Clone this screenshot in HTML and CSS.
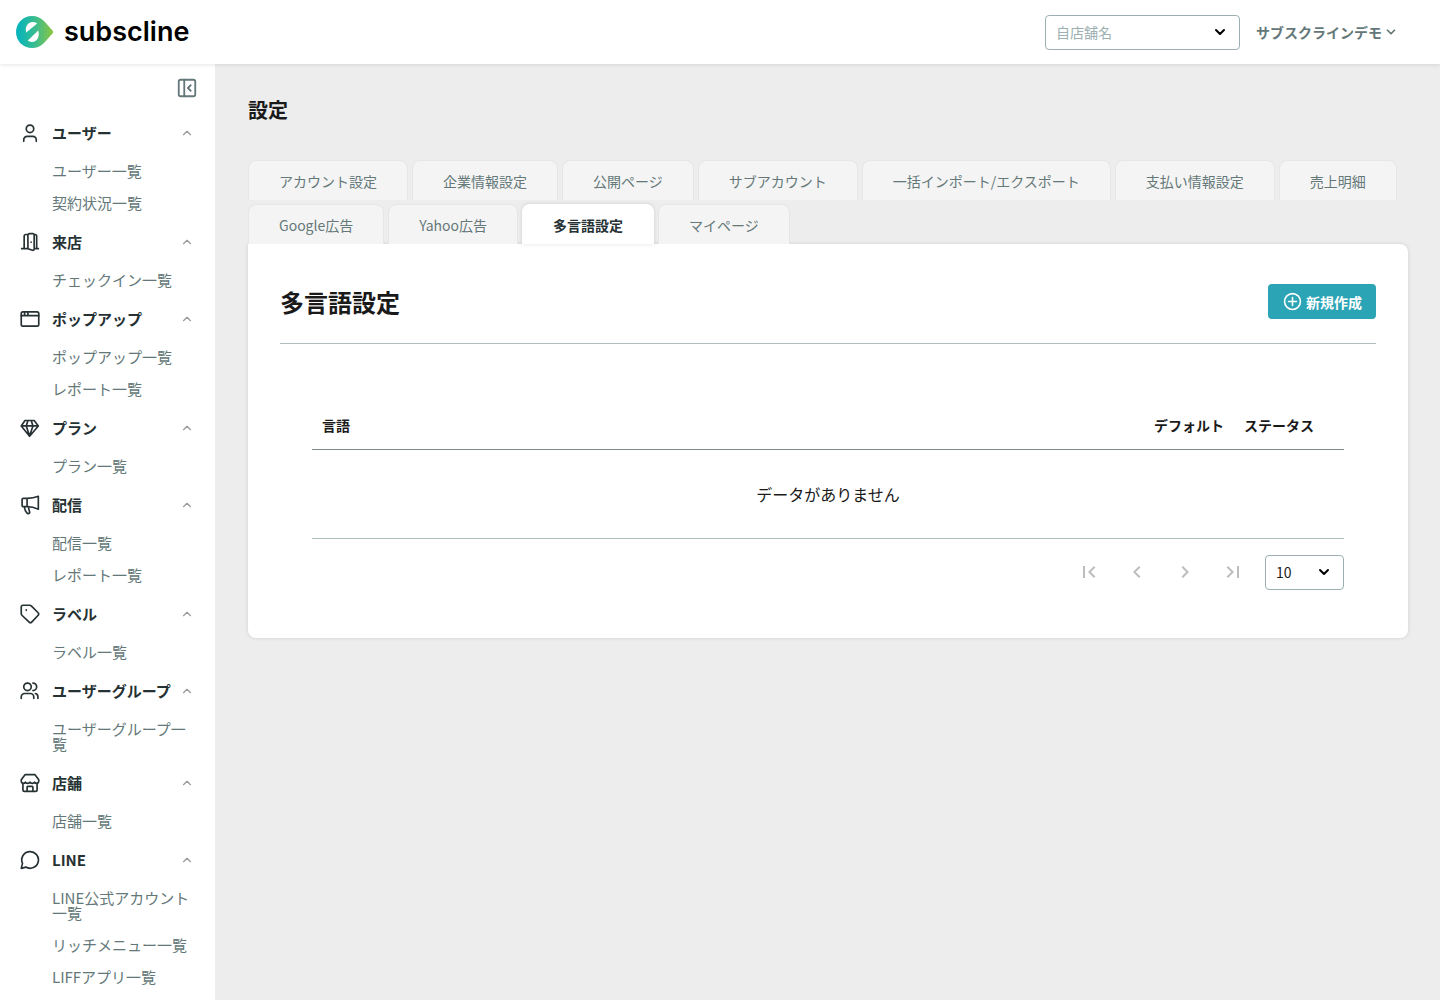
FILE: index.html
```html
<!DOCTYPE html>
<html lang="ja">
    <head>
        <title>設定 | subscline</title>
        <meta charset="UTF-8">
        <meta name="viewport" content="width=device-width, initial-scale=1">

        <link rel="stylesheet" href="styles.css">

    </head>
    <body>

        <!-- アイコン -->
        <svg class="sprite" aria-hidden="true">
            <symbol id="icon-up" viewBox="0 0 24 24"><path d="M6 15l6-6 6 6"/></symbol>
            <symbol id="icon-down" viewBox="0 0 24 24"><path d="M6 9l6 6 6-6"/></symbol>
        </svg>

        <header class="header">
            <a href="#" class="logo">
                <svg class="logo-mark" viewBox="0 0 38 32">
                    <defs>
                        <linearGradient id="logo-color" x1="0" x2="1" y1="0" y2="0">
                            <stop offset="0.1" stop-color="#0bb5b8"/>
                            <stop offset="0.55" stop-color="#3fbd8b"/>
                            <stop offset="1" stop-color="#8cc540"/>
                        </linearGradient>
                    </defs>
                    <path fill="url(#logo-color)" d="M16 0C7 0 0 7 0 16s7 16 16 16c5 0 9-2 12-5l8.500-9.500c.8-1 .8-2 0-3L28 5c-3-3-7-5-12-5z"/>
                    <path fill="#fff" d="M10.200 16.500C8.500 10.500 12 6 17 6c2 0 3.500.8 4.200 1.500z"/>
                    <path fill="#fff" d="M22.300 14.500C24 20.500 21 26 16 26c-2 0-3.500-.8-4.200-1.500z"/>
                </svg>
                <span class="logo-name">subscline</span>
            </a>
            <div class="header-menu">
                <div class="select select-shop">
                    <select id="shop" aria-label="自店舗名">
                        <option>自店舗名</option>
                    </select>
                    <svg class="select-arrow"><use href="#icon-down"/></svg>
                </div>
                <button type="button" class="account">サブスクラインデモ<svg><use href="#icon-down"/></svg></button>
            </div>
        </header>

        <div class="container">

            <aside class="sidebar">
                <button type="button" class="sidebar-toggle" aria-label="メニューを閉じる">
                    <svg viewBox="0 0 24 24"><rect x="3" y="3" width="18" height="18" rx="2"/><path d="M9 3v18M16 9l-3 3 3 3"/></svg>
                </button>
                <nav>
                    <button type="button" class="menu-head">
                        <svg class="menu-icon" viewBox="0 0 24 24"><circle cx="12" cy="7" r="4.500"/><path d="M4.500 22v-2a4 4 0 0 1 4-4h7a4 4 0 0 1 4 4v2"/></svg>
                        <span>ユーザー</span><svg class="menu-arrow"><use href="#icon-up"/></svg>
                    </button>
                    <a href="#" class="menu-item">ユーザー一覧</a>
                    <a href="#" class="menu-item">契約状況一覧</a>

                    <button type="button" class="menu-head">
                        <svg class="menu-icon" viewBox="0 0 24 24"><path d="M2 20h7M5 20V5a2 2 0 0 1 2-2h3M17 20h5M20 20V5a2 2 0 0 0-2-2M9.500 4v16l5.500 2a1.500 1.500 0 0 0 2-1.500V3.500A1.500 1.500 0 0 0 15 2h-3.500a2 2 0 0 0-2 2zM13.300 12v.4"/></svg>
                        <span>来店</span><svg class="menu-arrow"><use href="#icon-up"/></svg>
                    </button>
                    <a href="#" class="menu-item">チェックイン一覧</a>

                    <button type="button" class="menu-head">
                        <svg class="menu-icon" viewBox="0 0 24 24"><rect x="1.500" y="3.500" width="21" height="17" rx="2"/><path d="M1.500 8h21M5.500 4v4M9.500 4v4"/></svg>
                        <span>ポップアップ</span><svg class="menu-arrow"><use href="#icon-up"/></svg>
                    </button>
                    <a href="#" class="menu-item">ポップアップ一覧</a>
                    <a href="#" class="menu-item">レポート一覧</a>

                    <button type="button" class="menu-head">
                        <svg class="menu-icon" viewBox="0 0 24 24"><path d="M6 3h11l5 6.500L11.500 22 1.500 9.500zM1.500 9.500H22M9.500 3L7.500 9.500l4 12 4-12L13.500 3"/></svg>
                        <span>プラン</span><svg class="menu-arrow"><use href="#icon-up"/></svg>
                    </button>
                    <a href="#" class="menu-item">プラン一覧</a>

                    <button type="button" class="menu-head">
                        <svg class="menu-icon" viewBox="0 0 24 24"><path d="M8.500 4H4a1.500 1.500 0 0 0-1.500 1.500v7A1.500 1.500 0 0 0 4 14h4.500c5 0 9 1 13.500 3V1.500c-4 1.700-8.500 2.500-13.500 2.500zM8.500 4v10M5.500 14c0 3 .7 5.500 2.700 7.500 1.500 1.500 4 .5 3.300-1.500-.7-2-1.500-3.500-1-6"/></svg>
                        <span>配信</span><svg class="menu-arrow"><use href="#icon-up"/></svg>
                    </button>
                    <a href="#" class="menu-item">配信一覧</a>
                    <a href="#" class="menu-item">レポート一覧</a>

                    <button type="button" class="menu-head">
                        <svg class="menu-icon" viewBox="0 0 24 24"><path d="M1.500 3.500a2 2 0 0 1 2-2h8a3 3 0 0 1 2 .8l8.300 8.200a2 2 0 0 1 0 3l-7.800 8.200a2 2 0 0 1-3 0l-8.700-8.200a3 3 0 0 1-.8-2zM7.500 7v.6"/></svg>
                        <span>ラベル</span><svg class="menu-arrow"><use href="#icon-up"/></svg>
                    </button>
                    <a href="#" class="menu-item">ラベル一覧</a>

                    <button type="button" class="menu-head">
                        <svg class="menu-icon" viewBox="0 0 24 24"><circle cx="9" cy="7" r="4.500"/><path d="M1.500 21v-2a4 4 0 0 1 4-4h7a4 4 0 0 1 4 4v2M15.500 2.500a4.500 4.500 0 0 1 0 9M18.500 15a4 4 0 0 1 3 4v2"/></svg>
                        <span>ユーザーグループ</span><svg class="menu-arrow"><use href="#icon-up"/></svg>
                    </button>
                    <a href="#" class="menu-item">ユーザーグループ一覧</a>

                    <button type="button" class="menu-head">
                        <svg class="menu-icon" viewBox="0 0 24 24"><path d="M3.500 12v8a2 2 0 0 0 2 2h13a2 2 0 0 0 2-2v-8M6 2h12l4.500 6v2c0 3-3.500 3-5 1-1 2-4.500 2-5.500 0-1 2-4.500 2-5.500 0-1.500 2-5 2-5-1V8zM8.500 22v-5a1 1 0 0 1 1-1h5a1 1 0 0 1 1 1v5"/></svg>
                        <span>店舗</span><svg class="menu-arrow"><use href="#icon-up"/></svg>
                    </button>
                    <a href="#" class="menu-item">店舗一覧</a>

                    <button type="button" class="menu-head">
                        <svg class="menu-icon" viewBox="0 0 24 24"><path d="M1.500 22l1.500-6A10 10 0 1 1 7 20.500z"/></svg>
                        <span>LINE</span><svg class="menu-arrow"><use href="#icon-up"/></svg>
                    </button>
                    <a href="#" class="menu-item">LINE公式アカウント一覧</a>
                    <a href="#" class="menu-item">リッチメニュー一覧</a>
                    <a href="#" class="menu-item">LIFFアプリ一覧</a>
                </nav>
            </aside>

            <main class="main">
                <h1 class="page-title">設定</h1>

                <nav class="tabs">
                    <a href="#" class="tab">アカウント設定</a>
                    <a href="#" class="tab">企業情報設定</a>
                    <a href="#" class="tab">公開ページ</a>
                    <a href="#" class="tab">サブアカウント</a>
                    <a href="#" class="tab">一括インポート/エクスポート</a>
                    <a href="#" class="tab">支払い情報設定</a>
                    <a href="#" class="tab">売上明細</a>
                    <a href="#" class="tab">Google広告</a>
                    <a href="#" class="tab">Yahoo広告</a>
                    <a href="#" class="tab tab-active">多言語設定</a>
                    <a href="#" class="tab">マイページ</a>
                </nav>

                <section class="panel">
                    <div class="panel-head">
                        <h2>多言語設定</h2>
                        <button type="button" class="button-add">
                            <svg viewBox="0 0 24 24"><circle cx="12" cy="12" r="10"/><path d="M12 7v10M7 12h10"/></svg>新規作成
                        </button>
                    </div>

                    <div class="panel-body">
                        <table class="table">
                            <thead>
                                <tr>
                                    <th>言語</th>
                                    <th class="col-default">デフォルト</th>
                                    <th class="col-status">ステータス</th>
                                </tr>
                            </thead>
                            <tbody>
                                <tr>
                                    <td colspan="3">データがありません</td>
                                </tr>
                            </tbody>
                        </table>

                        <div class="pager">
                            <button type="button" class="pager-button" aria-label="最初のページ" disabled><svg viewBox="0 0 24 24"><path d="M18.400 16.600L13.800 12l4.600-4.600L17 6l-6 6 6 6zM6 6h2v12H6z"/></svg></button>
                            <button type="button" class="pager-button" aria-label="前のページ" disabled><svg viewBox="0 0 24 24"><path d="M15.400 7.400L14 6l-6 6 6 6 1.400-1.400L10.800 12z"/></svg></button>
                            <button type="button" class="pager-button" aria-label="次のページ" disabled><svg viewBox="0 0 24 24"><path d="M10 6L8.600 7.400l4.600 4.600-4.600 4.600L10 18l6-6z"/></svg></button>
                            <button type="button" class="pager-button" aria-label="最後のページ" disabled><svg viewBox="0 0 24 24"><path d="M5.600 7.400l4.600 4.600-4.600 4.600L7 18l6-6-6-6zM16 6h2v12h-2z"/></svg></button>
                            <div class="select select-count">
                                <select id="count" aria-label="表示件数">
                                    <option>10</option>
                                </select>
                                <svg class="select-arrow"><use href="#icon-down"/></svg>
                            </div>
                        </div>
                    </div>
                </section>
            </main>

        </div>

    </body>
</html>
```
FILE: styles.css
```css
* {
    box-sizing: border-box;
}

body {
    margin: 0;
    min-height: 100vh;
    display: flex;
    flex-direction: column;
    font-family: "Noto Sans CJK JP", sans-serif;
    font-size: 14px;
    color: #1a1a1a;
    background-color: #ededed;
}

button,
select {
    font-family: inherit;
    font-size: 14px;
}

button {
    padding: 0;
    border: 0;
    background: none;
    cursor: pointer;
}

a {
    color: inherit;
    text-decoration: none;
}

svg {
    flex-shrink: 0;
    fill: none;
    stroke: currentColor;
    stroke-width: 2;
    stroke-linecap: round;
    stroke-linejoin: round;
}

.sprite {
    display: none;
}

/* header */
.header {
    position: relative;
    z-index: 1;
    display: flex;
    justify-content: space-between;
    align-items: center;
    height: 64px;
    padding: 0 42px 0 16px;
    background-color: #fff;
    box-shadow: 0 1px 4px rgba(0, 0, 0, 0.1);
}

.logo {
    display: flex;
    align-items: center;
    gap: 10px;
    color: #000;
}

.logo-mark {
    width: 38px;
    height: 32px;
    stroke: none;
}

.logo-name {
    font-family: Inter, sans-serif;
    font-size: 27px;
    font-weight: 600;
    line-height: 32px;
}

.header-menu {
    display: flex;
    align-items: center;
    gap: 16px;
}

.account {
    display: flex;
    align-items: center;
    gap: 2px;
    font-weight: bold;
    color: #647879;
}

.account svg {
    width: 14px;
    height: 14px;
    stroke-width: 3;
}

/* select */
.select {
    position: relative;
}

.select select {
    display: block;
    width: 100%;
    height: 35px;
    padding: 0 10px;
    color: #1a1a1a;
    border: 1px solid #9db0b1;
    border-radius: 4px;
    background-color: #fff;
    appearance: none;
}

.select .select-arrow {
    position: absolute;
    top: 9px;
    right: 12px;
    width: 16px;
    height: 16px;
    color: #000;
    stroke-width: 3;
    pointer-events: none;
}

.select-shop {
    width: 195px;
}

.select-shop select {
    color: #9db0b1;
}

.select-count {
    width: 79px;
}

/* sidebar */
.container {
    flex: 1;
    display: flex;
}

.sidebar {
    flex-shrink: 0;
    width: 215px;
    padding: 13px 17px 0 20px;
    background-color: #fff;
}

.sidebar-toggle {
    display: block;
    margin: 0 0 11px auto;
    color: #647879;
}

.sidebar-toggle svg {
    display: block;
    width: 22px;
    height: 22px;
}

.menu-head {
    display: flex;
    align-items: center;
    width: 100%;
    height: 45px;
    font-size: 15px;
    font-weight: bold;
    color: #263133;
    white-space: nowrap;
}

.menu-icon {
    width: 20px;
    height: 20px;
    margin-right: 12px;
}

.menu-arrow {
    width: 14px;
    height: 14px;
    margin: 0 4px 0 auto;
    color: #999;
}

.menu-item {
    display: block;
    padding: 8px 4px 9px 32px;
    font-size: 15px;
    line-height: 15px;
    color: #647879;
}

.menu-item:hover,
.tab:hover {
    color: #2ba4b5;
}

/* main */
.main {
    flex: 1;
    min-width: 0;
    padding: 32px 32px 32px 33px;
}

.page-title {
    margin: 0 0 36px;
    font-size: 20px;
    line-height: 28px;
}

.tabs {
    display: flex;
    flex-wrap: wrap;
    gap: 4px;
}

.tab {
    height: 40px;
    padding: 0 30px;
    line-height: 40px;
    color: #647879;
    border: 1px solid #e6e6e6;
    border-bottom: 0;
    border-radius: 8px 8px 0 0;
    background-color: #f4f4f4;
}

.tab-active {
    font-weight: bold;
    color: #263133;
    border-color: #fff;
    background-color: #fff;
    box-shadow: 0 0 4px rgba(0, 0, 0, 0.12);
}

.panel {
    padding: 40px 32px 48px;
    border-radius: 0 8px 8px 8px;
    background-color: #fff;
    box-shadow: 0 0 4px rgba(0, 0, 0, 0.12);
}

.panel-head {
    display: flex;
    justify-content: space-between;
    align-items: center;
    padding-bottom: 24px;
    border-bottom: 1px solid #afbfc0;
}

.panel-head h2 {
    margin: 0;
    font-size: 24px;
    line-height: 35px;
}

.button-add {
    display: flex;
    align-items: center;
    gap: 4px;
    height: 35px;
    padding: 0 14px 0 15px;
    font-weight: bold;
    color: #fff;
    border-radius: 4px;
    background-color: #2ba4b5;
}

.button-add svg {
    width: 19px;
    height: 19px;
}

.button-add:hover {
    background-color: #238b9a;
}

.panel-body {
    padding: 57px 32px 0;
}

/* table */
.table {
    width: 100%;
    border-collapse: collapse;
}

.table th {
    height: 48px;
    padding: 0 10px;
    text-align: left;
    border-bottom: 1px solid #7c8b8c;
}

.table .col-default {
    width: 90px;
}

.table .col-status {
    width: 110px;
}

.table td {
    height: 89px;
    padding: 0;
    font-size: 16px;
    text-align: center;
    border-bottom: 1px solid #afbfc0;
}

.pager {
    display: flex;
    justify-content: flex-end;
    align-items: center;
    margin-top: 16px;
}

.pager-button {
    width: 48px;
    color: #bdbdbd;
}

.pager-button svg {
    display: block;
    width: 24px;
    height: 24px;
    margin: 0 auto;
    fill: currentColor;
    stroke: none;
}

.pager .select-count {
    margin-left: 8px;
}
```
